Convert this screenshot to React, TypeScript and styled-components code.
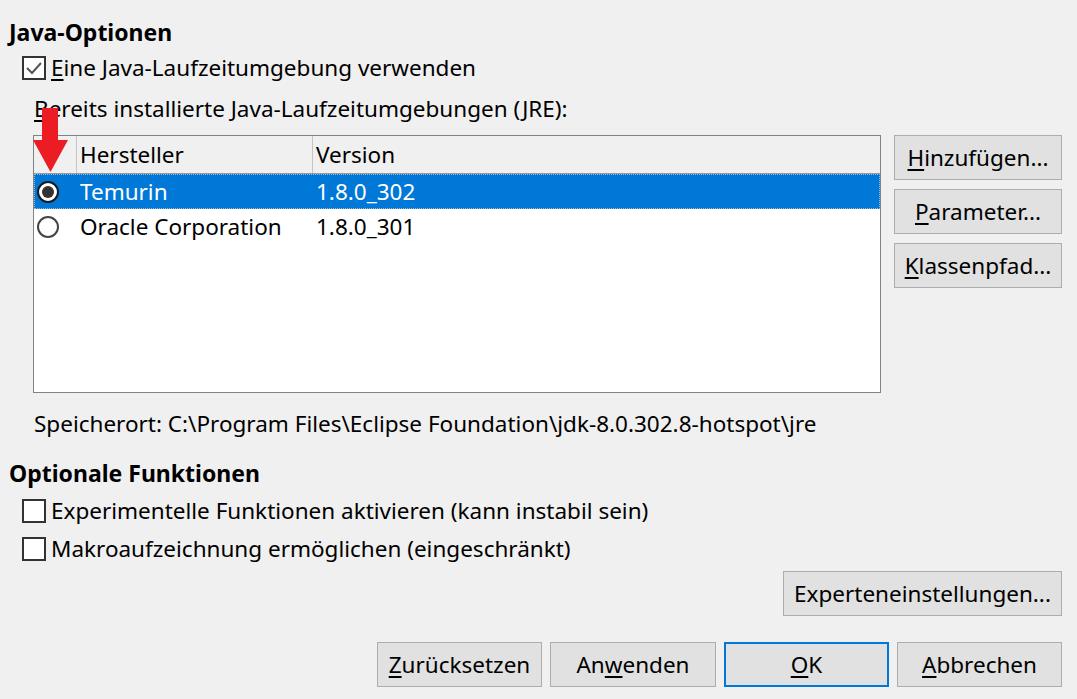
import { createGlobalStyle } from 'styled-components';
import styled from 'styled-components';

const GlobalStyle = createGlobalStyle`
    html, body {
        margin: 0;
        padding: 0;
        background: #f0f0f0;
    }
    body {
        font-family: 'Noto Sans', 'Open Sans', sans-serif;
        font-size: 22.5px;
        color: #000;
    }
`;

const Page = styled.div`
    width: 1077px;
    height: 699px;
    box-sizing: border-box;
    padding: 19px 15px 0 9px;
    display: flex;
    flex-direction: column;
`;

const SectionTitle = styled.h2<{ $top?: number }>`
    margin: ${(p) => p.$top ?? 0}px 0 0 0;
    font-size: 23px;
    font-weight: 700;
    line-height: 26px;
    height: 26px;
`;

const CheckRow = styled.label<{ $top: number }>`
    display: flex;
    align-items: center;
    gap: 5px;
    margin: ${(p) => p.$top}px 0 0 13px;
    height: 26px;
    line-height: 26px;
`;

const Box = styled.span`
    width: 24px;
    height: 24px;
    box-sizing: border-box;
    border: 2px solid #333;
    background: #fff;
    display: flex;
    align-items: center;
    justify-content: center;
`;

const Text = styled.div<{ $top: number; $left?: number }>`
    margin: ${(p) => p.$top}px 0 0 ${(p) => p.$left ?? 25}px;
    height: 26px;
    line-height: 26px;
    white-space: nowrap;
`;

const Key = styled.span`
    text-decoration: underline;
    text-decoration-thickness: 2px;
    text-underline-offset: 3px;
`;

const ListArea = styled.div`
    margin: 13px 0 0 24px;
    display: flex;
    gap: 13px;
    align-items: flex-start;
`;

const TableWrap = styled.div`
    position: relative;
    width: 848px;
    height: 258px;
    box-sizing: border-box;
    border: 1px solid #828282;
    background: #fff;
`;

const Row = styled.div<{ $selected?: boolean }>`
    display: grid;
    grid-template-columns: 43px 236px 1fr;
    height: 35px;
    align-items: center;
    background: ${(p) => (p.$selected ? '#0078d7' : 'transparent')};
    color: ${(p) => (p.$selected ? '#fff' : '#000')};
    outline: ${(p) => (p.$selected ? '1px dotted #9fb8d6' : 'none')};
    outline-offset: -1px;
`;

const HeadRow = styled.div`
    display: grid;
    grid-template-columns: 43px 236px 1fr;
    height: 37px;
    background: #f0f0f0;
    border-bottom: 1px solid #9a9a9a;
`;

const HeadCell = styled.div<{ $divider?: boolean }>`
    display: flex;
    align-items: center;
    padding-left: 3px;
    border-right: ${(p) => (p.$divider ? '1px solid #c4c4c4' : 'none')};
`;

const Cell = styled.div`
    padding-left: 3px;
    white-space: nowrap;
`;

const Radio = styled.span<{ $on?: boolean }>`
    display: flex;
    align-items: center;
    justify-content: center;
    width: 22px;
    height: 22px;
    box-sizing: border-box;
    border-radius: 50%;
    border: 2px solid ${(p) => (p.$on ? '#1a1a1a' : '#444')};
    background: #fff;
    &::after {
        content: '';
        display: ${(p) => (p.$on ? 'block' : 'none')};
        width: 12px;
        height: 12px;
        border-radius: 50%;
        background: #333;
    }
`;

const Arrow = styled.svg`
    position: absolute;
    left: -1px;
    top: -28px;
`;

const SideButtons = styled.div`
    display: flex;
    flex-direction: column;
    gap: 9px;
`;

const Button = styled.button<{ $w: number; $default?: boolean }>`
    width: ${(p) => p.$w}px;
    height: 45px;
    box-sizing: border-box;
    font: inherit;
    color: #000;
    background: #e1e1e1;
    border: ${(p) => (p.$default ? '2px solid #0078d7' : '1px solid #adadad')};
    padding: 0;
    line-height: 26px;
    white-space: nowrap;
`;

const RightRow = styled.div<{ $top: number; $gap?: number }>`
    display: flex;
    justify-content: flex-end;
    gap: ${(p) => p.$gap ?? 8}px;
    margin-top: ${(p) => p.$top}px;
`;

const Check = () => (
    <svg width="18" height="14" viewBox="0 0 18 14">
        <polyline points="2,7 7,12 16,2" fill="none" stroke="#555" strokeWidth="2" />
    </svg>
);

export default function App() {
    return (
        <>
            <GlobalStyle />
            <Page>
                <SectionTitle>Java-Optionen</SectionTitle>
                <CheckRow $top={10}>
                    <Box>
                        <Check />
                    </Box>
                    <span>
                        <Key>E</Key>ine Java-Laufzeitumgebung verwenden
                    </span>
                </CheckRow>
                <Text $top={15}>
                    <Key>B</Key>ereits installierte Java-Laufzeitumgebungen (JRE):
                </Text>
                <ListArea>
                    <TableWrap>
                        <HeadRow>
                            <HeadCell $divider />
                            <HeadCell $divider>Hersteller</HeadCell>
                            <HeadCell>Version</HeadCell>
                        </HeadRow>
                        <Row $selected>
                            <Cell>
                                <Radio $on />
                            </Cell>
                            <Cell>Temurin</Cell>
                            <Cell>1.8.0_302</Cell>
                        </Row>
                        <Row>
                            <Cell>
                                <Radio />
                            </Cell>
                            <Cell>Oracle Corporation</Cell>
                            <Cell>1.8.0_301</Cell>
                        </Row>
                        <Arrow width="36" height="65" viewBox="0 0 36 65">
                            <polygon
                                points="9,0 25,0 25,32 35,32 17.5,64 0,32 9,32"
                                fill="#ec1c24"
                            />
                        </Arrow>
                    </TableWrap>
                    <SideButtons>
                        <Button $w={168}>
                            <Key>H</Key>inzufügen...
                        </Button>
                        <Button $w={168}>
                            <Key>P</Key>arameter...
                        </Button>
                        <Button $w={168}>
                            <Key>K</Key>lassenpfad...
                        </Button>
                    </SideButtons>
                </ListArea>
                <Text $top={18}>
                    Speicherort: C:\Program Files\Eclipse Foundation\jdk-8.0.302.8-hotspot\jre
                </Text>
                <SectionTitle $top={23}>Optionale Funktionen</SectionTitle>
                <CheckRow $top={12}>
                    <Box />
                    <span>Experimentelle Funktionen aktivieren (kann instabil sein)</span>
                </CheckRow>
                <CheckRow $top={12}>
                    <Box />
                    <span>Makroaufzeichnung ermöglichen (eingeschränkt)</span>
                </CheckRow>
                <RightRow $top={9}>
                    <Button $w={279}>Experteneinstellungen...</Button>
                </RightRow>
                <RightRow $top={26}>
                    <Button $w={165}>
                        <Key>Z</Key>urücksetzen
                    </Button>
                    <Button $w={166}>
                        An<Key>w</Key>enden
                    </Button>
                    <Button $w={165} $default>
                        <Key>O</Key>K
                    </Button>
                    <Button $w={165}>
                        <Key>A</Key>bbrechen
                    </Button>
                </RightRow>
            </Page>
        </>
    );
}
